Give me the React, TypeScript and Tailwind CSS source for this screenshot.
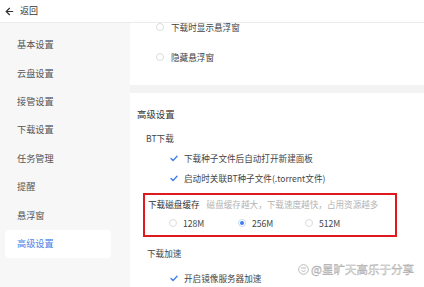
import { ArrowLeft } from "lucide-react";

const FONT = "font-['Noto_Sans_CJK_SC','Noto_Sans',sans-serif]";

const MENU = ["基本设置", "云盘设置", "接管设置", "下载设置", "任务管理", "提醒", "悬浮窗", "高级设置"];

function Radio({ checked = false }: { checked?: boolean }) {
  return (
    <span
      className={
        checked
          ? "flex h-[8px] w-[8px] items-center justify-center rounded-full border border-[#c9d9f7] bg-white"
          : "flex h-[8px] w-[8px] items-center justify-center rounded-full border border-[#dcdcdc] bg-white"
      }
    >
      {checked ? <span className="h-[4px] w-[4px] rounded-full bg-[#3d7cf2]" /> : null}
    </span>
  );
}

function Check() {
  return (
    <svg width="8" height="7" viewBox="0 0 8 7" className="shrink-0">
      <path d="M1 3.6 L3 5.6 L7 1.2" fill="none" stroke="#3d7cf2" strokeWidth="1.4" strokeLinecap="round" strokeLinejoin="round" />
    </svg>
  );
}

function CheckRow({ label, mt = "" }: { label: string; mt?: string }) {
  return (
    <div className={`flex h-[20px] items-center gap-[6px] pl-[40px] text-[8.6px] text-[#444] ${mt}`}>
      <Check />
      <span>{label}</span>
    </div>
  );
}

export default function App() {
  return (
    <div className={`relative h-[287px] w-[424px] overflow-hidden bg-white ${FONT}`}>
      <div className="flex h-[23px] items-center gap-[5px] border-b border-[#ebebeb] bg-white pl-[4px] text-[9px] text-[#333]">
        <ArrowLeft size={11} strokeWidth={2.6} />
        <span>返回</span>
      </div>

      <div className="flex h-[264px]">
        <div className="w-[130px] shrink-0 bg-[#f7f7f8] px-[5px] pt-[8px]">
          {MENU.map((m) => (
            <div
              key={m}
              className={
                m === "高级设置"
                  ? "flex h-[28.4px] w-[106px] items-center rounded-[4px] bg-white pl-[12px] text-[9.2px] text-[#4a7fe6]"
                  : "flex h-[28.4px] w-[106px] items-center pl-[12px] text-[9.2px] text-[#555]"
              }
            >
              {m}
            </div>
          ))}
        </div>

        <div className="flex-1 overflow-hidden bg-[#f3f3f4]">
          <div className="-mt-[11px] bg-white pl-[26px] pb-[13px]">
            <div className="flex h-[30px] items-center gap-[7px] text-[8.6px] text-[#444]">
              <Radio />
              <span>下载时显示悬浮窗</span>
            </div>
            <div className="flex h-[30px] items-center gap-[7px] text-[8.6px] text-[#444]">
              <Radio />
              <span>隐藏悬浮窗</span>
            </div>
          </div>

          <div className="mt-[8px] bg-white pt-[14px] pb-[20px]">
            <div className="flex h-[14px] items-center pl-[7px] text-[9.4px] text-[#333]">高级设置</div>
            <div className="mt-[7px] flex h-[20px] items-center pl-[16px] text-[8.6px] text-[#444]">BT下载</div>
            <CheckRow label="下载种子文件后自动打开新建面板" />
            <CheckRow label="启动时关联BT种子文件(.torrent文件)" />

            <div className="mt-[5px] ml-[13px] h-[44px] w-[254px] border-2 border-[#e0191f] px-[2px]">
              <div className="flex h-[18px] items-center gap-[7px] pl-[1px] text-[8.6px]">
                <span className="text-[#333]">下载磁盘缓存</span>
                <span className="text-[#b4b4b4]">磁盘缓存越大，下载速度越快，占用资源越多</span>
              </div>
              <div className="flex h-[20px] items-center pl-[22px] text-[8.6px] text-[#444]">
                <div className="flex w-[69px] items-center gap-[6px]">
                  <Radio />
                  <span>128M</span>
                </div>
                <div className="flex w-[67px] items-center gap-[6px]">
                  <Radio checked />
                  <span>256M</span>
                </div>
                <div className="flex items-center gap-[6px]">
                  <Radio />
                  <span>512M</span>
                </div>
              </div>
            </div>

            <div className="mt-[6px] flex h-[20px] items-center pl-[17px] text-[8.6px] text-[#444]">下载加速</div>
            <CheckRow label="开启镜像服务器加速" mt="mt-[5px]" />
          </div>
        </div>
      </div>

      <div className="absolute left-[298px] top-[264px] flex items-center gap-[2px] text-[11.5px] leading-none text-white [-webkit-text-stroke:0.45px_#a8a8a8]">
        <svg width="11" height="11" viewBox="0 0 11 11">
          <circle cx="5.5" cy="5.5" r="4.8" fill="white" stroke="#a8a8a8" strokeWidth="0.8" />
          <path d="M3 4 H8 M3.5 6 L5.5 8 L7.5 6" fill="none" stroke="#a8a8a8" strokeWidth="0.8" />
        </svg>
        <span>@星旷天高乐于分享</span>
      </div>
    </div>
  );
}
